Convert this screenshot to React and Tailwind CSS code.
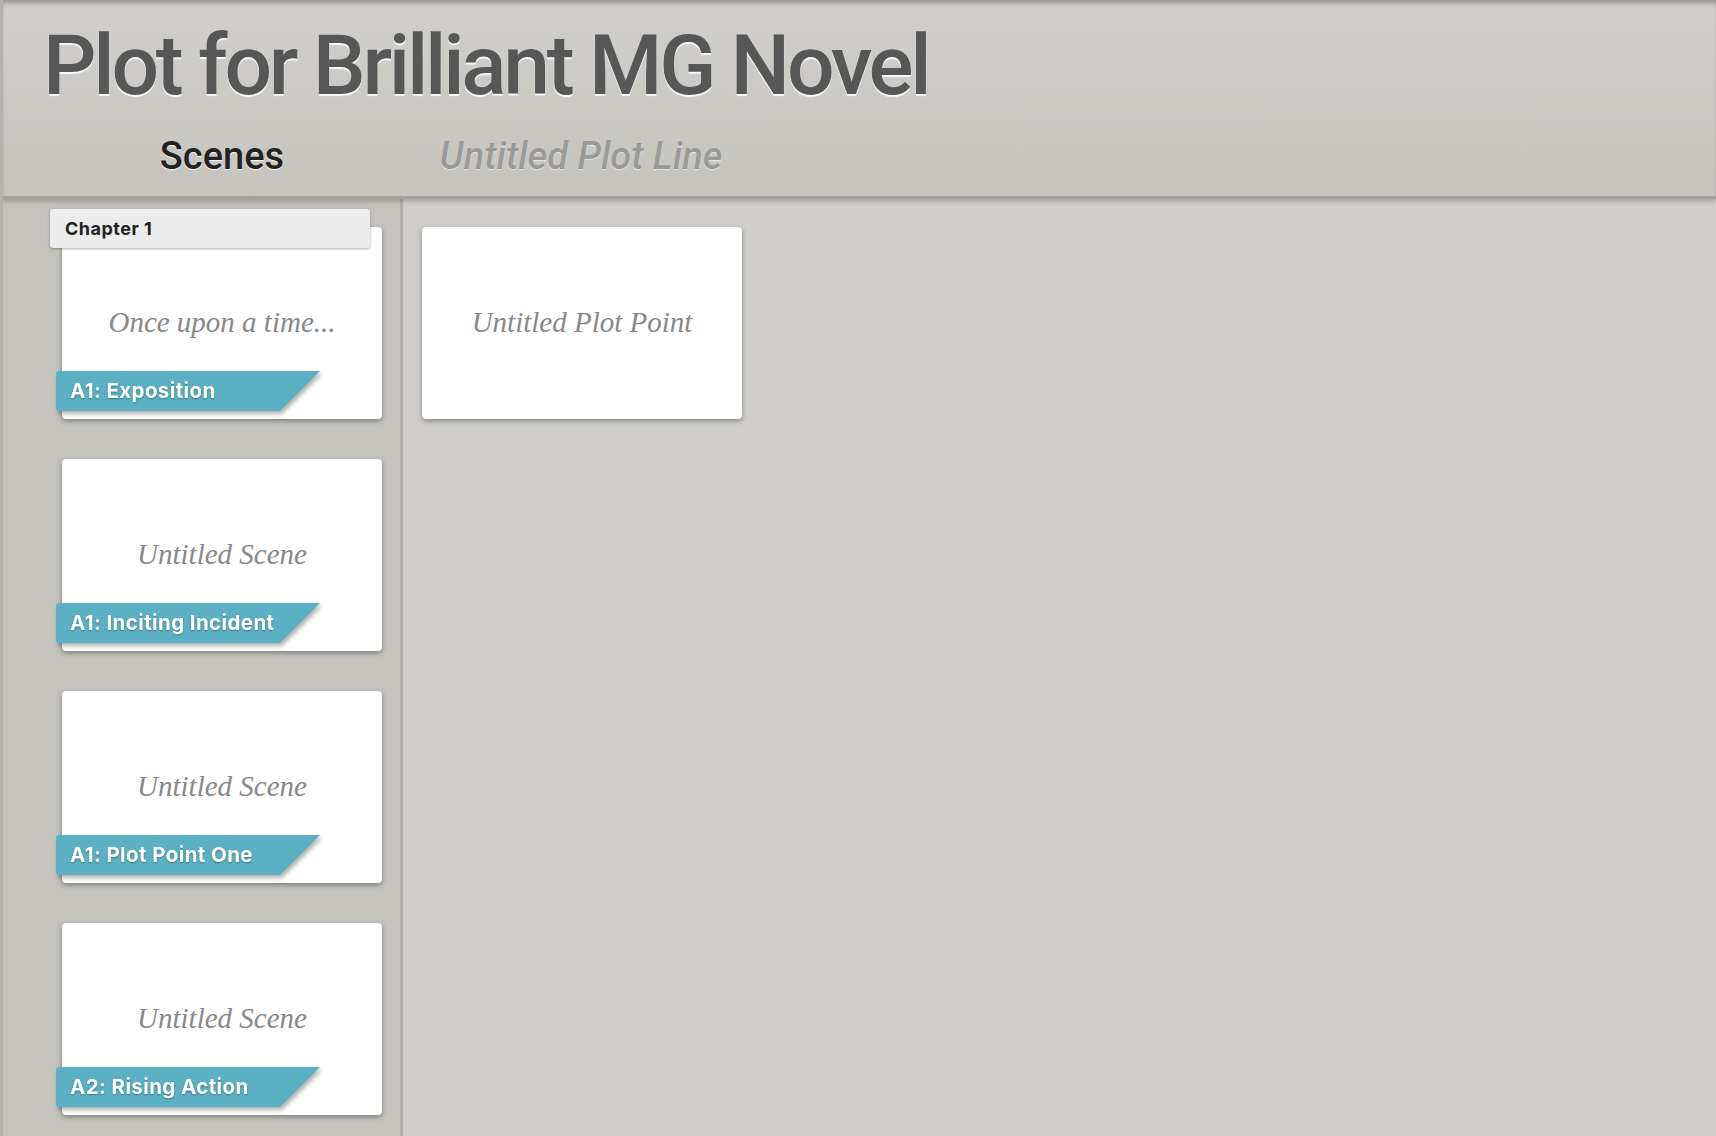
import React from 'react';

const scenes = [
  { title: 'Once upon a time...', beat: 'A1: Exposition', chapter: 'Chapter 1' },
  { title: 'Untitled Scene', beat: 'A1: Inciting Incident' },
  { title: 'Untitled Scene', beat: 'A1: Plot Point One' },
  { title: 'Untitled Scene', beat: 'A2: Rising Action' },
];

const serif = { fontFamily: '"Liberation Serif", "DejaVu Serif", serif' };

const BeatLabel = ({ text }) => (
  <div className="absolute left-[-6px] bottom-[8px] drop-shadow-[2px_3px_2px_rgba(0,0,0,0.3)]">
    <div className="h-[40px] w-[264px] rounded-l-[4px] bg-[#5bb1c3] pl-[14px] flex items-center [clip-path:polygon(0_0,100%_0,calc(100%-40px)_100%,0_100%)]">
      <span className="font-['Inter',sans-serif] text-[20.5px] font-bold tracking-[0.4px] text-white [text-shadow:0_1px_2px_rgba(0,0,0,0.35)]">
        {text}
      </span>
    </div>
  </div>
);

const Card = ({ title, children }) => (
  <div className="relative h-[192px] w-[320px] rounded-[4px] bg-white shadow-[0_2px_5px_rgba(0,0,0,0.35)] flex items-center justify-center">
    <span style={serif} className="italic text-[29px] text-[#888]">{title}</span>
    {children}
  </div>
);

export default function App() {
  return (
    <div className="h-[1136px] w-[1716px] overflow-hidden bg-[#cfceca] font-['Roboto',sans-serif] flex flex-col border-l-[3px] border-[#b3b2ae]">
      <header className="relative z-10 h-[199px] shrink-0 bg-gradient-to-b from-[#d0cfcb] to-[#c5c4bf] border-b-[3px] border-[#a3a29d] shadow-[inset_0_5px_5px_-2px_rgba(0,0,0,0.3),0_3px_4px_rgba(0,0,0,0.18)] flex flex-col">
        <h1 className="pl-[40px] pt-[16px] text-[84px] font-medium leading-[100px] tracking-[-3.3px] text-[#575757] [text-shadow:0_2px_1px_rgba(255,255,255,0.9)]">
          Plot for Brilliant MG Novel
        </h1>
        <div className="flex mt-[12px]">
          <div className="w-[418px] pl-[20px] text-center">
            <span className="text-[38px] font-medium text-[#222] [text-shadow:0_1px_1px_rgba(255,255,255,0.9)]">Scenes</span>
          </div>
          <div className="w-[320px] text-center">
            <span className="text-[38px] italic font-medium text-[#9a9a98] [text-shadow:0_1px_1px_rgba(255,255,255,0.6)]">Untitled Plot Line</span>
          </div>
        </div>
      </header>
      <div className="flex flex-1">
        <aside className="w-[400px] shrink-0 bg-[#c3c2bd] border-r-[3px] border-[#b1b0ab] pl-[59px] pt-[28px] flex flex-col gap-[40px]">
          {scenes.map((s, i) => (
            <div key={i} className="relative">
              {s.chapter && (
                <div className="absolute left-[-12px] top-[-18px] z-10 h-[39px] w-[320px] rounded-[3px] bg-[#ececed] shadow-[0_1px_3px_rgba(0,0,0,0.3)] pl-[15px] flex items-center">
                  <span className="font-['Inter',sans-serif] text-[18px] font-bold tracking-[0.5px] text-[#222]">{s.chapter}</span>
                </div>
              )}
              <Card title={s.title}>
                <BeatLabel text={s.beat} />
              </Card>
            </div>
          ))}
        </aside>
        <main className="flex-1 pl-[19px] pt-[28px]">
          <Card title="Untitled Plot Point" />
        </main>
      </div>
    </div>
  );
}
